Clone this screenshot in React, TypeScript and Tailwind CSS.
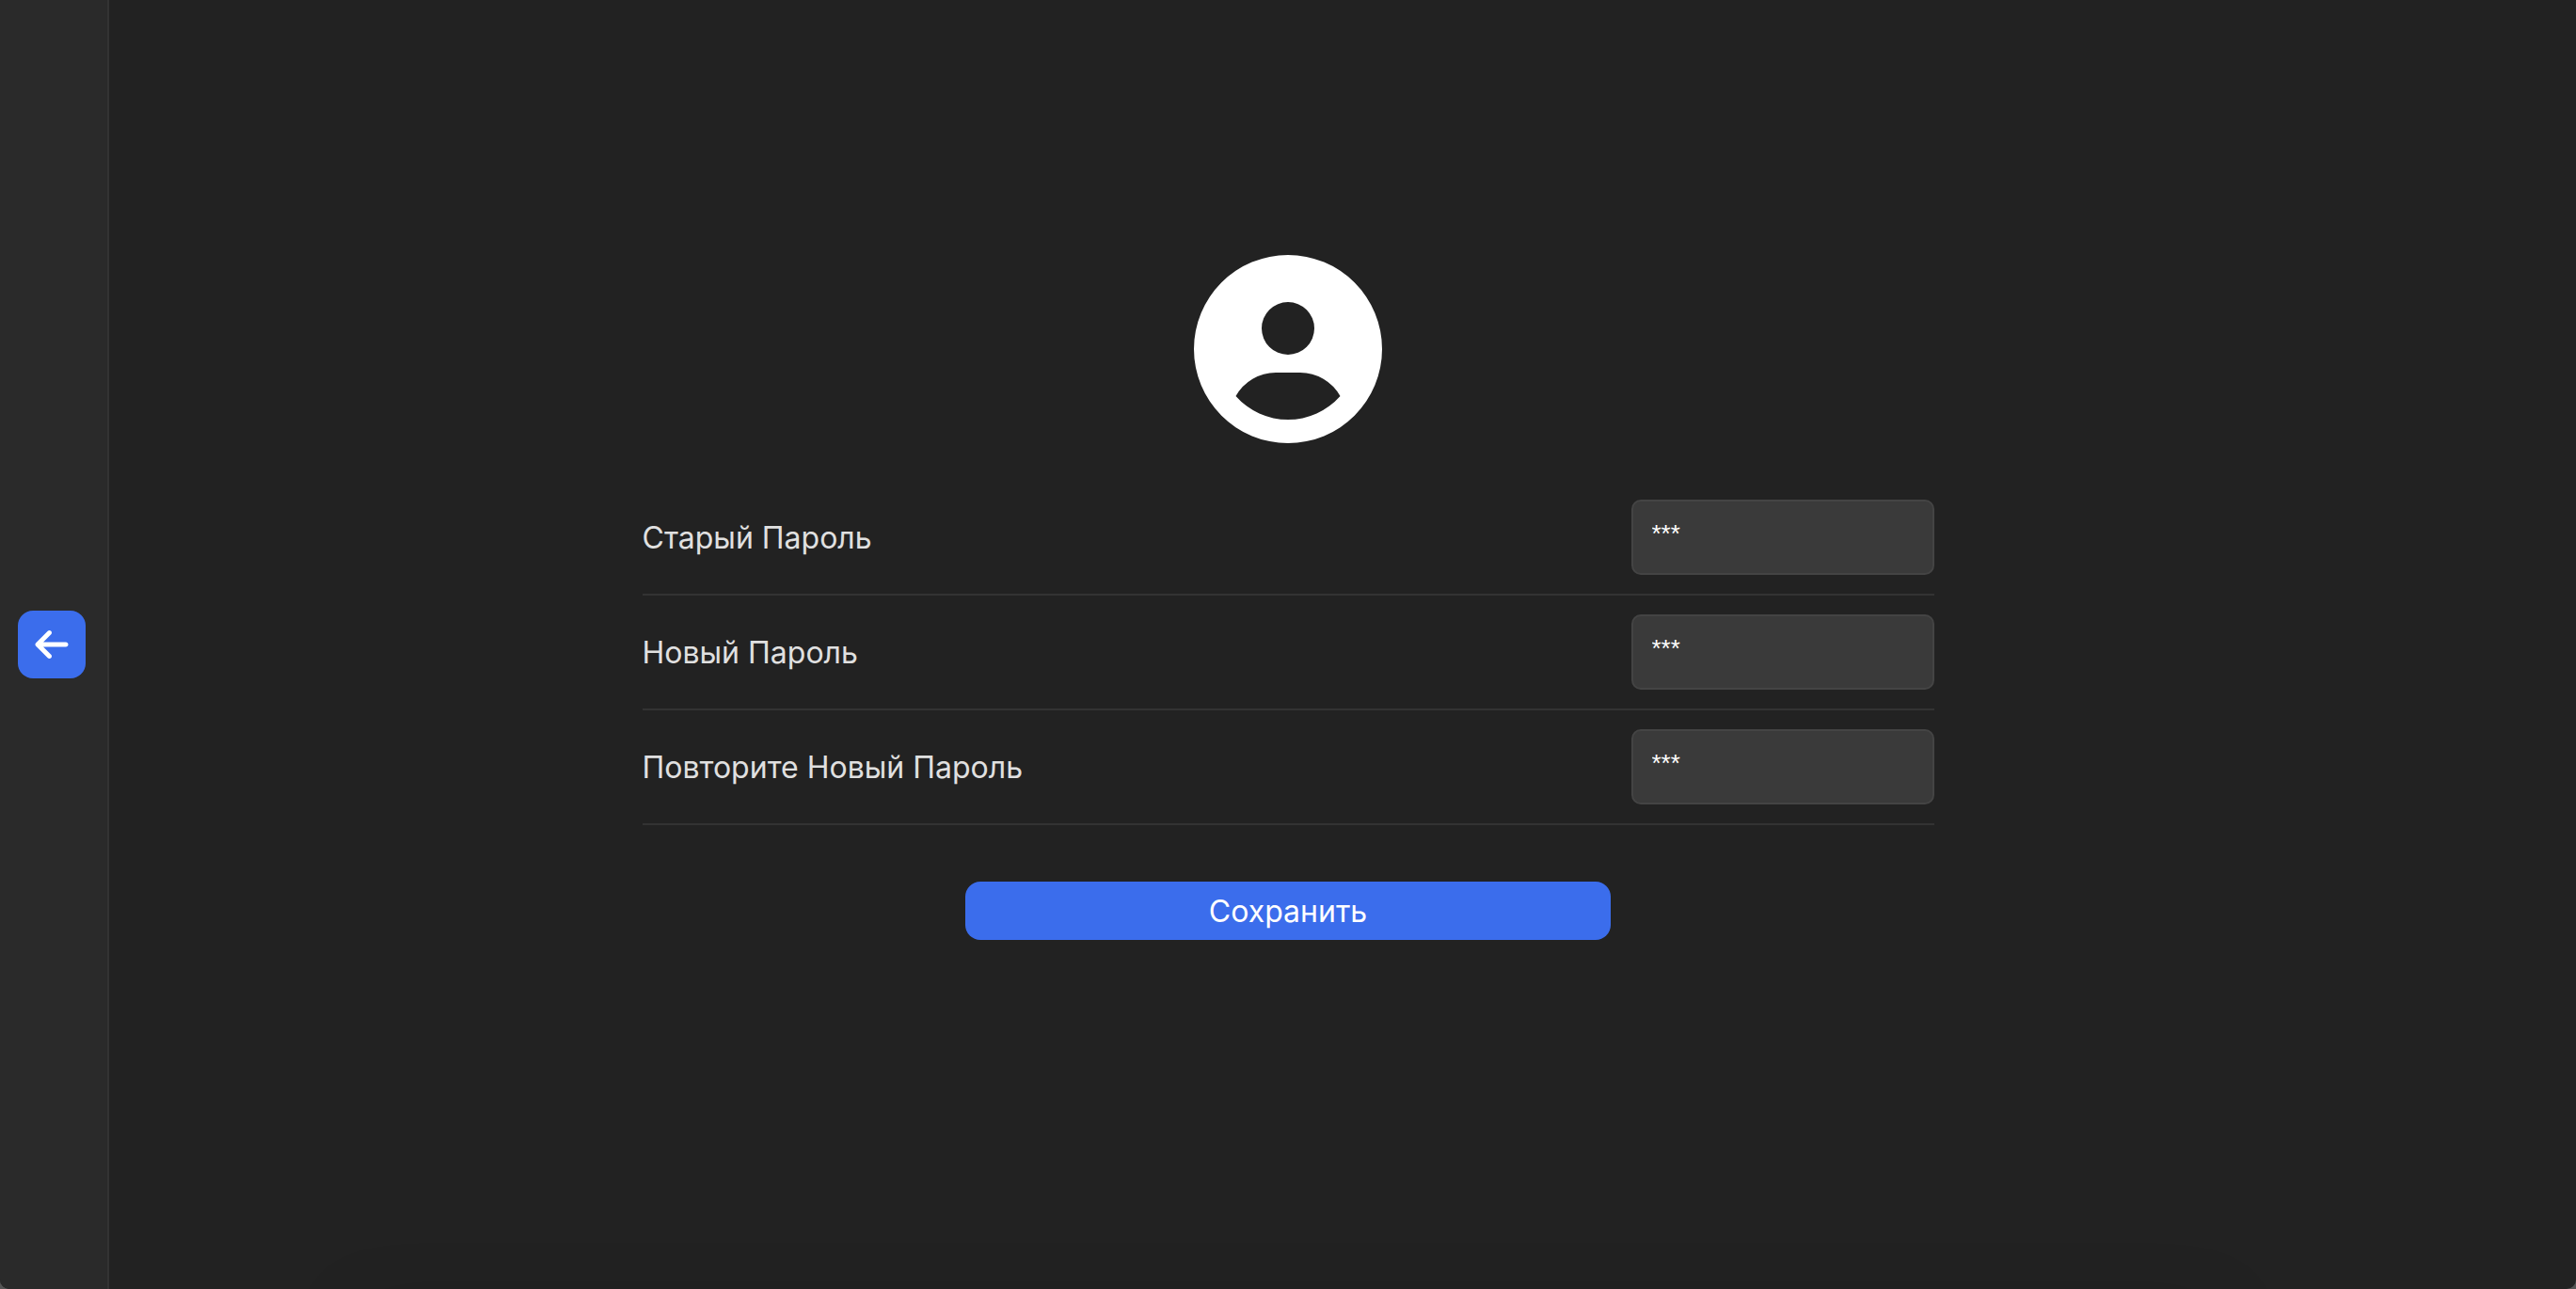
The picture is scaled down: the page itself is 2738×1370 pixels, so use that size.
import { useState } from "react";
import { FaArrowLeft } from "react-icons/fa6";

const fields = [
  { id: "old-password", label: "Старый Пароль" },
  { id: "new-password", label: "Новый Пароль" },
  { id: "repeat-password", label: "Повторите Новый Пароль" },
];

function Avatar() {
  return (
    <svg viewBox="0 0 200 200" className="m-5 size-[200px] shrink-0 text-white" aria-hidden="true">
      <path
        fill="currentColor"
        fillRule="evenodd"
        d="M100 0a100 100 0 1 1 0 200a100 100 0 1 1 0-200ZM100 50a28 28 0 1 0 0 56a28 28 0 1 0 0-56ZM44.5 150A74 74 0 0 0 155.5 150A49 49 0 0 0 113 125H87A49 49 0 0 0 44.5 150Z"
      />
    </svg>
  );
}

function PasswordRow({ id, label }: { id: string; label: string }) {
  const [value, setValue] = useState("***");
  return (
    <div className="flex items-center justify-between gap-5 border-b-2 border-[#333333] py-5">
      <label htmlFor={id} className="pt-0.5 text-[32px] leading-10 text-[#e0e0e0]">
        {label}
      </label>
      <input
        id={id}
        type="text"
        value={value}
        onChange={(e) => setValue(e.target.value)}
        className="h-20 w-[322px] rounded-[10px] border-2 border-[#444444] bg-[#3a3a3a] px-5 pb-2 font-['Liberation_Sans',sans-serif] text-[26px] text-white outline-none"
      />
    </div>
  );
}

export default function App() {
  return (
    <div className="bg-[#555555]">
      <div className="relative flex min-h-screen flex-col overflow-hidden rounded-b-[10px] bg-[#222222] font-['Inter','Noto_Sans',sans-serif]">
        <aside className="absolute inset-y-0 left-0 flex items-center border-r-2 border-[#333333] bg-[#2a2a2a] pr-[23px] pl-[19px]">
          <button type="button" aria-label="Назад" className="rounded-2xl bg-[#3b6dec] p-4 text-white">
            <FaArrowLeft className="size-10" />
          </button>
        </aside>

        <main className="flex flex-1 flex-col items-center justify-center pb-[120px]">
          <Avatar />
          <form
            className="mt-5 flex w-[calc(50%+4px)] flex-col items-center"
            onSubmit={(e) => e.preventDefault()}
          >
            <div className="w-full">
              {fields.map((f) => (
                <PasswordRow key={f.id} {...f} />
              ))}
            </div>
            <button
              type="submit"
              className="mt-[60px] w-1/2 rounded-2xl bg-[#3b6dec] pt-3 pb-2.5 text-[32px] leading-10 text-white"
            >
              Сохранить
            </button>
          </form>
        </main>

        <div className="pointer-events-none absolute inset-x-[380px] top-full h-10 shadow-[0_28px_80px_rgba(0,0,0,0.2)]" />
      </div>
    </div>
  );
}
